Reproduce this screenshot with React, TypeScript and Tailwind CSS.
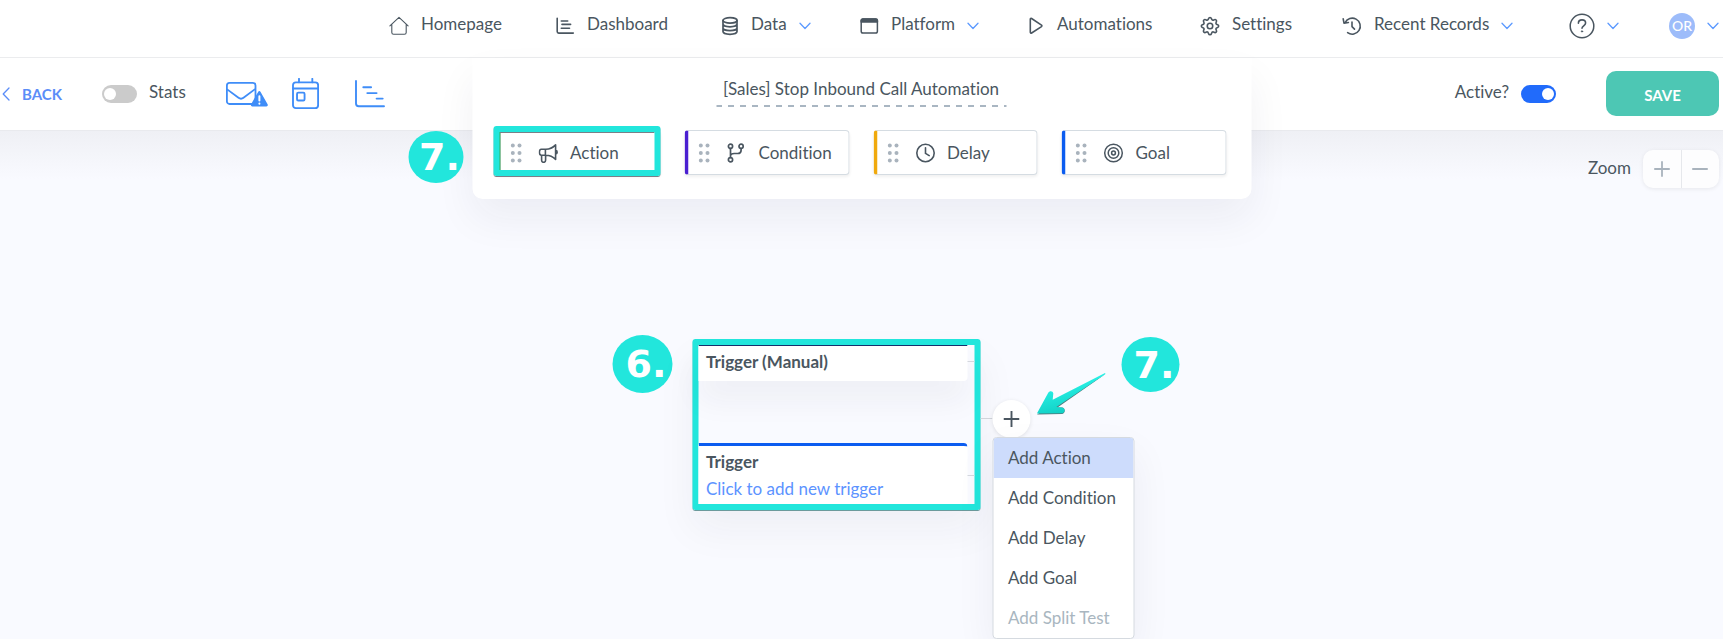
import React from "react";

type IconProps = { className?: string };

const line = {
  fill: "none",
  stroke: "currentColor",
  strokeWidth: 1.6,
  strokeLinecap: "round" as const,
  strokeLinejoin: "round" as const,
  "aria-hidden": true,
};

const HomeIcon = () => (
  <svg width="20" height="20" viewBox="0 0 20 20" {...line} strokeWidth={1.1}>
    <path d="M.9 9.8 10 1.4l9.1 8.4M2.8 8.4v8.1c0 1 .8 1.8 1.8 1.8h10.8c1 0 1.8-.8 1.8-1.8V8.4" />
  </svg>
);

const DashboardIcon = () => (
  <svg width="20" height="20" viewBox="0 0 20 20" {...line}>
    <path d="M2.2 2.2v13.4c0 .9.6 1.500 1.500 1.500h14.600M6.300 5h6.400M7 8.400h8.600M6.300 12.300h8.200" />
  </svg>
);

const DataIcon = () => (
  <svg width="18" height="20" viewBox="1 0 18 20" {...line} strokeWidth={1.7}>
    <ellipse cx="10" cy="4.4" rx="7" ry="2.7" />
    <path d="M3 4.400v11.200c0 1.500 3.100 2.700 7 2.700s7-1.200 7-2.700V4.400M3 8.100c0 1.500 3.100 2.700 7 2.700s7-1.200 7-2.700M3 11.900c0 1.500 3.100 2.700 7 2.700s7-1.200 7-2.700" />
  </svg>
);

const PlatformIcon = () => (
  <svg width="20" height="20" viewBox="0 0 20 20" {...line} strokeWidth={1.5}>
    <rect x="2.200" y="3" width="16.200" height="14" rx="1.800" />
    <path d="M2.200 6V4.600C2.200 3.700 3 3 3.900 3h12.800c.9 0 1.700.7 1.700 1.600V6z" fill="currentColor" />
  </svg>
);

const PlayIcon = () => (
  <svg width="18" height="20" viewBox="1 0 18 20" {...line}>
    <path d="M4.300 3.300v12.900c0 .7.7 1.100 1.300.8l9.900-6.400c.5-.4.5-1.100 0-1.500L5.600 2.500c-.6-.3-1.300.1-1.300.8z" />
  </svg>
);

const GearIcon = () => (
  <svg width="20" height="20" viewBox="0 0 24 24" {...line} strokeWidth={1.9}>
    <path d="M10.300 2.900c.5-1.600 2.900-1.600 3.400 0l.3.900c.3 1 1.500 1.500 2.400 1l.9-.4c1.500-.8 3.100.9 2.400 2.400l-.4.9c-.5.9 0 2.100 1 2.400l.9.300c1.600.5 1.600 2.800 0 3.300l-.9.300c-1 .3-1.500 1.500-1 2.400l.4.9c.8 1.500-.9 3.200-2.400 2.400l-.9-.4c-.9-.5-2.100 0-2.400 1l-.3.9c-.5 1.600-2.900 1.600-3.400 0l-.3-.9c-.3-1-1.500-1.500-2.400-1l-.9.400c-1.500.8-3.100-.9-2.400-2.400l.4-.9c.5-.9 0-2.100-1-2.400l-.9-.3c-1.600-.5-1.600-2.800 0-3.300l.9-.3c1-.3 1.500-1.500 1-2.400l-.4-.9c-.8-1.500.9-3.200 2.400-2.400l.9.400c.9.500 2.100 0 2.400-1z" />
    <circle cx="12" cy="12" r="3.300" />
  </svg>
);

const HistoryIcon = () => (
  <svg width="20" height="20" viewBox="0 0 20 20" {...line}>
    <path d="M3 6.800A8 8 0 1 1 5.600 16.700M1.200 2.900l.8 4.300 4.400-.7M10 6.100v4.500l2.500 2.500" />
  </svg>
);

const HelpIcon = () => (
  <svg width="26" height="26" viewBox="0 0 26 26" {...line} strokeWidth={1.500}>
    <circle cx="13" cy="13" r="11.800" />
    <path d="M9.400 10.200c0-2 1.500-3.300 3.600-3.300s3.600 1.200 3.600 3.100c0 2.700-3.600 2.900-3.600 5.200" strokeWidth={1.600} />
    <circle cx="13" cy="18.400" r=".7" fill="currentColor" strokeWidth={0.800} />
  </svg>
);

const ChevronDown = () => (
  <svg className="text-[#5c9aff]" width="12" height="8" viewBox="0 0 12 8" {...line} strokeWidth={1.300}>
    <path d="M1 1.300 6 6.500l5-5.200" />
  </svg>
);

const MailAlertIcon = () => (
  <svg width="42" height="26" viewBox="0 0 42 26" {...line} strokeWidth={1.800}>
    <rect x=".9" y="1.800" width="28.600" height="21.200" rx="2.600" />
    <path d="m1.500 8.600 11 8.200c1.500 1.100 3.500 1.100 5 0l11.200-8.400" />
    <path
      d="M32.100 10.900c.6-1.100 1.900-1.100 2.500 0l7 12.300c.6 1.100-.1 2.300-1.200 2.300H26.300c-1.100 0-1.800-1.200-1.200-2.300z"
      fill="currentColor"
      stroke="none"
    />
    <path d="M33.400 15.300v4.300M33.400 22.600v.2" stroke="white" strokeWidth={2} />
  </svg>
);

const CalendarIcon = () => (
  <svg width="27" height="31" viewBox="0 0 26 30" {...line} strokeWidth={1.800}>
    <rect x=".9" y="4.300" width="24.300" height="24.800" rx="2.800" />
    <path d="M1 10.200h24M6.700.8v3.300M19.600.8v3.300" />
    <rect x="4.800" y="14.200" width="7.300" height="7.600" rx="1.200" />
  </svg>
);

const TimelineIcon = () => (
  <svg width="30" height="28" viewBox="0 0 30 28" {...line} strokeWidth={1.900}>
    <path d="M1 1v22.600c0 1.700 1 2.700 2.700 2.700H29M8.300 7.300h7.800M12.300 13.100h9.300M21.600 18.600h6.100" />
  </svg>
);

const MegaphoneIcon = () => (
  <svg width="20" height="20" viewBox="0 0 20 20" {...line}>
    <path d="M2.800 6.300h4.600c3.500 0 6.800-1.400 9.700-4.400v14.500c-2.900-3-6.200-4.200-9.700-4.200H2.800c-1.100 0-1.900-1.100-1.900-2.900s.8-3 1.900-3zM6.900 6.400v5.700M17.100 7.300c2.100.4 2.100 3.300 0 3.700M3.100 12.300v5c0 1.200.8 2 2 2s2-.8 2-2v-5" />
  </svg>
);

const BranchIcon = () => (
  <svg width="20" height="20" viewBox="0 0 20 20" {...line} strokeWidth={1.700}>
    <circle cx="4" cy="3.300" r="2.100" />
    <circle cx="4" cy="16.700" r="2.100" />
    <circle cx="14.600" cy="3.300" r="2.100" />
    <path d="M4 5.500v9M14.600 5.500v1.700c0 2.200-1.200 3.300-3.300 3.300H7.700c-2.200 0-3.700.8-3.700 2.800" />
  </svg>
);

const ClockIcon = () => (
  <svg width="20" height="20" viewBox="0 0 20 20" {...line}>
    <circle cx="10" cy="10" r="8.700" />
    <path d="M10 4.800v5.600l3.700 2.200" />
  </svg>
);

const TargetIcon = () => (
  <svg width="20" height="20" viewBox="0 0 20 20" {...line} strokeWidth={1.500}>
    <circle cx="10" cy="10" r="8.800" />
    <circle cx="10" cy="10" r="5.300" />
    <circle cx="10" cy="10" r="1.900" />
  </svg>
);

const Grip = ({ className }: IconProps) => (
  <svg className={className} width="12" height="20" viewBox="0 0 12 20" fill="#a9b3bd" aria-hidden>
    {[2.500, 10, 17.500].map((y) => (
      <React.Fragment key={y}>
        <circle cx="2.300" cy={y} r="2" />
        <circle cx="9" cy={y} r="2" />
      </React.Fragment>
    ))}
  </svg>
);

const navItems = [
  { label: "Homepage", icon: <HomeIcon />, menu: false, width: "w-[166px]" },
  { label: "Dashboard", icon: <DashboardIcon />, menu: false, width: "w-[166px]" },
  { label: "Data", icon: <DataIcon />, menu: true, width: "w-[138px]" },
  { label: "Platform", icon: <PlatformIcon />, menu: true, width: "w-[168px]" },
  { label: "Automations", icon: <PlayIcon />, menu: false, width: "w-[173px]" },
  { label: "Settings", icon: <GearIcon />, menu: false, width: "w-[142px]" },
  { label: "Recent Records", icon: <HistoryIcon />, menu: true, width: "w-[227px]" },
];

const steps = [
  { label: "Action", icon: <MegaphoneIcon />, accent: "border-l-[#2fb35a]", marked: true },
  { label: "Condition", icon: <BranchIcon />, accent: "border-l-[#4a1fd1]", marked: false },
  { label: "Delay", icon: <ClockIcon />, accent: "border-l-[#f0a90c]", marked: false },
  { label: "Goal", icon: <TargetIcon />, accent: "border-l-[#0b5cf0]", marked: false },
];

const menuOptions = ["Add Action", "Add Condition", "Add Delay", "Add Goal", "Add Split Test"];

const Marker = ({ text, className }: { text: string; className: string }) => (
  <div
    className={`absolute flex items-center justify-center rounded-[50%] bg-[#22e6dc] pl-2 font-['DejaVu_Sans',sans-serif] text-[38px] leading-none font-bold text-white ${className}`}
  >
    {text}
  </div>
);

const Toggle = ({ id, on }: { id: string; on: boolean }) => (
  <input
    id={id}
    type="checkbox"
    role="switch"
    defaultChecked={on}
    className="relative h-[18px] w-[35px] shrink-0 appearance-none rounded-full bg-[#cbcbcb] before:absolute before:top-[3px] before:left-[2px] before:size-3 before:rounded-full before:bg-white checked:bg-[#216bfb] checked:before:left-[21px]"
  />
);

export default function App() {
  return (
    <div className="flex min-h-screen flex-col overflow-hidden bg-[#f9faff] font-[Lato,sans-serif] text-[17px] leading-6 text-[#4a5660] [font-variant-ligatures:none]">
      <header className="border-b border-[#ebecee] bg-white">
        <nav aria-label="Main" className="flex h-[57px] items-center justify-end pr-1 pb-[10px]">
          {navItems.map((item) => (
            <a key={item.label} href="#" className={`flex shrink-0 items-center whitespace-nowrap ${item.width}`}>
              <span className="mt-1 shrink-0">{item.icon}</span>
              <span className="ml-3">{item.label}</span>
              {item.menu && (
                <span className="mt-1 ml-3">
                  <ChevronDown />
                </span>
              )}
            </a>
          ))}
          <button type="button" aria-label="Help" className="mt-1 flex shrink-0 items-center gap-3">
            <HelpIcon />
            <ChevronDown />
          </button>
          <button type="button" className="mt-1 ml-[50px] flex shrink-0 items-center gap-3">
            <span className="flex size-[26px] items-center justify-center rounded-full bg-[#9dbcfa] text-sm font-medium text-white">
              OR
            </span>
            <ChevronDown />
          </button>
        </nav>
      </header>

      <div className="relative z-10 flex h-[73px] items-center justify-between border-b border-[#e9eaee] bg-white pr-1 pb-px pl-[2px]">
        <div className="flex items-center">
          <a href="#" className="flex items-center gap-3 text-[15px] font-bold text-[#5b8df8]">
            <svg width="8" height="14" viewBox="0 0 8 14" {...line} strokeWidth={1.300}>
              <path d="M7 1 1.200 7 7 13" />
            </svg>
            BACK
          </a>
          <div className="ml-10 flex items-center gap-3">
            <Toggle id="stats" on={false} />
            <label htmlFor="stats" className="pb-1">
              Stats
            </label>
          </div>
          <div className="ml-10 flex items-center text-[#3f8df8]">
            <button type="button" aria-label="Email warnings">
              <MailAlertIcon />
            </button>
            <button type="button" aria-label="Calendar" className="ml-6">
              <CalendarIcon />
            </button>
            <button type="button" aria-label="Timeline" className="ml-9">
              <TimelineIcon />
            </button>
          </div>
        </div>

        <div className="flex items-center">
          <label htmlFor="active" className="pb-1">
            Active?
          </label>
          <span className="ml-3 flex">
            <Toggle id="active" on />
          </span>
          <button
            type="button"
            className="ml-[50px] h-[45px] w-[113px] rounded-[10px] bg-[#4dc7b4] pt-[2px] text-[15px] font-bold text-white"
          >
            SAVE
          </button>
        </div>

        <section
          aria-label="Automation steps"
          className="absolute top-0 left-1/2 w-[779px] -translate-x-1/2 rounded-b-[10px] bg-white pt-[19px] pr-[25px] pb-6 pl-6 shadow-[0_20px_40px_rgba(40,40,60,0.06)]"
        >
          <div className="mx-auto w-[290px]">
            <input
              aria-label="Automation name"
              defaultValue="[Sales] Stop Inbound Call Automation"
              className="block h-[30px] w-full bg-[repeating-linear-gradient(90deg,#a9b6c2_0_6px,transparent_6px_12px)] bg-[length:100%_2px] bg-bottom bg-no-repeat pb-2 text-center outline-none"
            />
          </div>
          <div className="mt-[23px] grid grid-cols-4 gap-6">
            {steps.map((step) => (
              <div
                key={step.label}
                className={`relative flex h-[45px] items-center rounded-[4px] border border-l-4 border-[#d5dce2] bg-white pl-[10px] shadow-[0_2px_3px_rgba(0,0,0,0.06)] ${step.accent}`}
              >
                <Grip />
                <span className="ml-4">{step.icon}</span>
                <span className="ml-3">{step.label}</span>
                {step.marked && (
                  <span className="absolute -top-[5px] -right-px -bottom-[2px] -left-[7px] rounded-[3px] border-6 border-[#22e6dc] shadow-[0_1px_0_#7a8088,inset_0_1px_0_#7a8088,inset_1px_0_0_#4f9a68]" />
                )}
              </div>
            ))}
          </div>
          <Marker text="7." className="top-[73px] -left-16 h-[52px] w-[55px]" />
        </section>
      </div>

      <main className="relative min-h-[508px] flex-1">
        <div className="h-12 bg-linear-to-b from-[#eff0f5] to-[#f9faff]" />

        <div className="absolute top-[19px] right-1 flex items-center gap-3">
          <span className="pb-[2px]">Zoom</span>
          <div className="flex h-[38px] w-[76px] divide-x divide-[#e6e8ec] rounded-[10px] bg-[#fdfdfe] text-[#a9b3bd] shadow-[0_1px_4px_rgba(0,0,0,0.08)]">
            <button type="button" aria-label="Zoom in" className="flex flex-1 items-center justify-center">
              <svg width="16" height="16" viewBox="0 0 16 16" {...line} strokeWidth={1.800}>
                <path d="M8 .9v14.200M.9 8h14.200" />
              </svg>
            </button>
            <button type="button" aria-label="Zoom out" className="flex flex-1 items-center justify-center">
              <svg width="16" height="16" viewBox="0 0 16 16" {...line} strokeWidth={1.800}>
                <path d="M.9 8h14.200" />
              </svg>
            </button>
          </div>
        </div>

        <div className="absolute inset-y-0 left-1/2 w-[779px] -translate-x-1/2">
          <Marker text="6." className="top-[204px] left-[140px] h-[58px] w-[60px]" />

          <div className="absolute top-[208px] left-[220px] h-[171px] w-[288px] rounded-[3px] border-6 border-[#22e6dc] shadow-[0_1px_0_#6b9a9c,0_20px_40px_rgba(40,40,60,0.05)]">
            <article className="mr-[7px] h-9 rounded-br-[4px] border-t border-[#16306b] bg-white px-2 pt-1 font-bold shadow-[0_20px_30px_rgba(40,40,60,0.05)]">
              Trigger (Manual)
            </article>
            <article className="mt-[62px] mr-[7px] h-[61px] rounded-tr-[4px] border-t-3 border-[#0b5cf0] bg-white px-2 pt-1">
              <h2 className="font-bold">Trigger</h2>
              <a href="#" className="mt-[3px] block text-[#5c93ff]">
                Click to add new trigger
              </a>
            </article>
            <span className="absolute top-4 right-0 h-px w-[7px] bg-[#d5d8de]" />
            <span className="absolute top-[130px] right-0 h-px w-[7px] bg-[#d5d8de]" />
          </div>

          <span className="absolute top-[287px] left-[508px] h-px w-3 bg-[#d0d4da]" />
          <button
            type="button"
            aria-label="Add step"
            className="absolute top-[269px] left-[520px] flex size-[38px] items-center justify-center rounded-full bg-white shadow-[0_1px_4px_rgba(0,0,0,0.1)]"
          >
            <svg width="16" height="16" viewBox="0 0 16 16" {...line} strokeWidth={1.900} strokeLinecap="butt">
              <path d="M8 0v16M0 8h16" />
            </svg>
          </button>

          <ul className="absolute top-[306px] left-[520px] w-[142px] overflow-hidden rounded-[4px] border border-[#d5dae0] bg-white shadow-[0_16px_40px_rgba(40,40,60,0.06)]">
            {menuOptions.map((option) => (
              <li key={option}>
                <button
                  type="button"
                  disabled={option === "Add Split Test"}
                  className="h-10 w-full pl-[15px] text-left whitespace-nowrap disabled:text-[#a9b6c0] data-[active=true]:bg-[#cddcfc]"
                  data-active={option === "Add Action"}
                >
                  {option}
                </button>
              </li>
            ))}
          </ul>

          <svg className="absolute top-[239px] left-[563px]" width="72" height="46" viewBox="0 0 72 46" aria-hidden>
            <defs>
              <linearGradient id="arrow" x1="0" y1="0" x2=".4" y2="1">
                <stop offset=".4" stopColor="#27efe4" />
                <stop offset="1" stopColor="#10cfc4" />
              </linearGradient>
            </defs>
            <path
              d="M70 4 22 37.600l4.500 0c3.600.3 3.700 5.900.2 6.500L1.400 44.400z"
              fill="#51777b"
            />
            <path
              d="M69.500 3 17.200 29.700l.6-6.100c-.3-3-3.900-3.200-5.200-.6L1.400 43.500l25.200-.3c3.300-.5 3.300-5.200.1-5.800l-5.800-.3L70 4z"
              fill="url(#arrow)"
            />
          </svg>
          <Marker text="7." className="top-[206px] left-[649px] h-[55px] w-[58px]" />
        </div>
      </main>
    </div>
  );
}
